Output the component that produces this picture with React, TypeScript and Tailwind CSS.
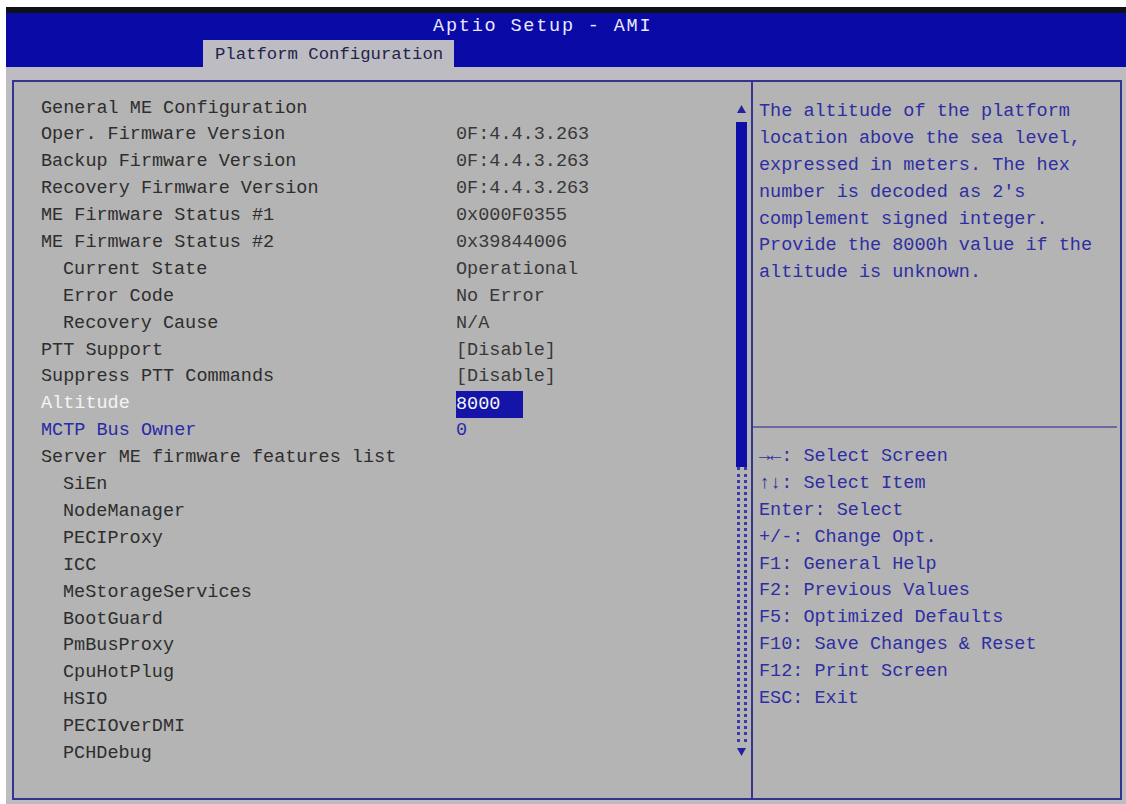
import React from "react";

type Row = {
  label: string;
  value?: string;
  indent?: boolean;
  tone?: "normal" | "selected" | "blue";
};

const rows: Row[] = [
  { label: "General ME Configuration" },
  { label: "Oper. Firmware Version", value: "0F:4.4.3.263" },
  { label: "Backup Firmware Version", value: "0F:4.4.3.263" },
  { label: "Recovery Firmware Version", value: "0F:4.4.3.263" },
  { label: "ME Firmware Status #1", value: "0x000F0355" },
  { label: "ME Firmware Status #2", value: "0x39844006" },
  { label: "Current State", value: "Operational", indent: true },
  { label: "Error Code", value: "No Error", indent: true },
  { label: "Recovery Cause", value: "N/A", indent: true },
  { label: "PTT Support", value: "[Disable]" },
  { label: "Suppress PTT Commands", value: "[Disable]" },
  { label: "Altitude", value: "8000", tone: "selected" },
  { label: "MCTP Bus Owner", value: "0", tone: "blue" },
  { label: "Server ME firmware features list" },
  { label: "SiEn", indent: true },
  { label: "NodeManager", indent: true },
  { label: "PECIProxy", indent: true },
  { label: "ICC", indent: true },
  { label: "MeStorageServices", indent: true },
  { label: "BootGuard", indent: true },
  { label: "PmBusProxy", indent: true },
  { label: "CpuHotPlug", indent: true },
  { label: "HSIO", indent: true },
  { label: "PECIOverDMI", indent: true },
  { label: "PCHDebug", indent: true },
];

const helpLines = [
  "The altitude of the platform",
  "location above the sea level,",
  "expressed in meters. The hex",
  "number is decoded as 2's",
  "complement signed integer.",
  "Provide the 8000h value if the",
  "altitude is unknown.",
];

const keyLines = [
  "→←: Select Screen",
  "↑↓: Select Item",
  "Enter: Select",
  "+/-: Change Opt.",
  "F1: General Help",
  "F2: Previous Values",
  "F5: Optimized Defaults",
  "F10: Save Changes & Reset",
  "F12: Print Screen",
  "ESC: Exit",
];

const mono = "font-['Liberation_Mono','DejaVu_Sans_Mono',monospace]";

function SettingRow({ row }: { row: Row }) {
  const labelColor =
    row.tone === "selected"
      ? "text-[#f4f4f4]"
      : row.tone === "blue"
      ? "text-[#2a2aa6]"
      : "text-[#2e2e2e]";
  return (
    <div className="flex h-[26.9px] items-center whitespace-pre">
      <div className={`w-[415px] ${row.indent ? "pl-[22px]" : ""} ${labelColor}`}>{row.label}</div>
      {row.value &&
        (row.tone === "selected" ? (
          <div className="h-[27px] w-[67px] bg-[#1414a8] leading-[27px] text-[#f4f4f4]">{row.value}</div>
        ) : (
          <div className={row.tone === "blue" ? "text-[#2a2aa6]" : "text-[#383838]"}>{row.value}</div>
        ))}
    </div>
  );
}

function ScrollBar() {
  return (
    <div className="mr-[4px] flex w-[11px] flex-col items-center pt-[23px] pb-[42px]">
      <svg width="9" height="8" viewBox="0 0 9 8" className="mb-[9px]">
        <path d="M4.5 0 L9 8 L0 8 Z" fill="#2222a0" />
      </svg>
      <div className="h-[345px] w-[11px] bg-[#0d0da8]" />
      <div className="w-[10px] flex-1 border-x-[3px] border-dotted border-[#3a3aa8]" />
      <svg width="9" height="8" viewBox="0 0 9 8" className="mt-[6px]">
        <path d="M0 0 L9 0 L4.5 8 Z" fill="#2222a0" />
      </svg>
    </div>
  );
}

export default function App() {
  return (
    <div className={`h-[804px] w-[1126px] overflow-hidden bg-white pt-[7px] pl-[6px] ${mono}`}>
      <div className="flex h-[797px] flex-col bg-[#bcbcc2]">
        <div className="h-[6px] bg-[#101018]" />
        <div className="flex h-[54px] flex-col bg-[#0a0aa6]">
          <div className="h-[27px] pl-[427px] pt-[4px] text-[18.5px] leading-[20px] tracking-[1.8px] text-[#e8e8ff]">
            Aptio Setup - AMI
          </div>
          <div className="ml-[197px] h-[27px] w-[251px] bg-[#bcbcc2] pl-[12px] text-[17.3px] leading-[29px] text-[#22224a]">
            Platform Configuration
          </div>
        </div>
        <div className="mt-[13px] mr-[4px] ml-[6px] mb-[4px] flex flex-1 border-2 border-[#35358e] bg-[#b4b4b4] text-[18.5px]">
          <div className="flex w-[739px] border-r-2 border-[#35358e]">
            <div className="flex-1 pt-[13px] pl-[27px]">
              {rows.map((r) => (
                <SettingRow key={r.label} row={r} />
              ))}
            </div>
            <ScrollBar />
          </div>
          <div className="flex flex-1 flex-col text-[#2e2ea2]">
            <div className="h-[344px] pt-[17px] pl-[6px]">
              {helpLines.map((l) => (
                <div key={l} className="h-[26.9px] leading-[26.9px] whitespace-pre">
                  {l}
                </div>
              ))}
            </div>
            <div className="mr-[3px] h-[2px] bg-[#6a6aa0]" />
            <div className="pt-[16px] pl-[6px]">
              {keyLines.map((l) => (
                <div key={l} className="h-[26.9px] leading-[26.9px] whitespace-pre">
                  {l}
                </div>
              ))}
            </div>
          </div>
        </div>
      </div>
    </div>
  );
}
